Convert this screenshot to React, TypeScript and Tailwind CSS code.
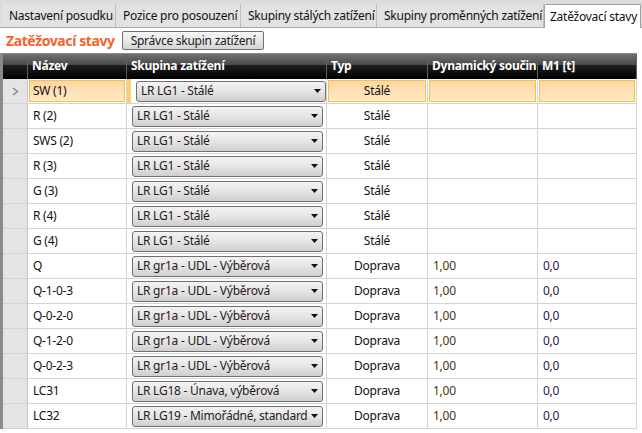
import React from "react";

const TABS = [
    { label: "Nastavení posudku", w: "w-[114px]" },
    { label: "Pozice pro posouzení", w: "w-[125px]" },
    { label: "Skupiny stálých zatížení", w: "w-[136px]" },
    { label: "Skupiny proměnných zatížení", w: "w-[167px]" },
];

type Row = { name: string; group: string; typ: string; dyn: string; m1: string };

const ROWS: Row[] = [
    { name: "SW (1)", group: "LR LG1 - Stálé", typ: "Stálé", dyn: "", m1: "" },
    { name: "R (2)", group: "LR LG1 - Stálé", typ: "Stálé", dyn: "", m1: "" },
    { name: "SWS (2)", group: "LR LG1 - Stálé", typ: "Stálé", dyn: "", m1: "" },
    { name: "R (3)", group: "LR LG1 - Stálé", typ: "Stálé", dyn: "", m1: "" },
    { name: "G (3)", group: "LR LG1 - Stálé", typ: "Stálé", dyn: "", m1: "" },
    { name: "R (4)", group: "LR LG1 - Stálé", typ: "Stálé", dyn: "", m1: "" },
    { name: "G (4)", group: "LR LG1 - Stálé", typ: "Stálé", dyn: "", m1: "" },
    { name: "Q", group: "LR gr1a - UDL - Výběrová", typ: "Doprava", dyn: "1,00", m1: "0,0" },
    { name: "Q-1-0-3", group: "LR gr1a - UDL - Výběrová", typ: "Doprava", dyn: "1,00", m1: "0,0" },
    { name: "Q-0-2-0", group: "LR gr1a - UDL - Výběrová", typ: "Doprava", dyn: "1,00", m1: "0,0" },
    { name: "Q-1-2-0", group: "LR gr1a - UDL - Výběrová", typ: "Doprava", dyn: "1,00", m1: "0,0" },
    { name: "Q-0-2-3", group: "LR gr1a - UDL - Výběrová", typ: "Doprava", dyn: "1,00", m1: "0,0" },
    { name: "LC31", group: "LR LG18 - Únava, výběrová", typ: "Doprava", dyn: "1,00", m1: "0,0" },
    { name: "LC32", group: "LR LG19 - Mimořádné, standard", typ: "Doprava", dyn: "1,00", m1: "0,0" },
];

const HEADERS = [
    { label: "Název", w: "w-[99px]" },
    { label: "Skupina zatížení", w: "w-[200px]" },
    { label: "Typ", w: "w-[101px]" },
    { label: "Dynamický součin", w: "w-[110px]" },
    { label: "M1 [t]", w: "w-[99px]" },
];

function Combo({ value }: { value: string }) {
    return (
        <div className="flex h-[21px] w-[191px] items-center justify-between rounded-[3px] border border-[#707070] bg-gradient-to-b from-[#f3f3f3] via-[#e5e5e5] to-[#cfcfcf] pl-[4px] pr-[4px]">
            <span className="whitespace-nowrap text-[#2a1a1a]">{value}</span>
            <svg width="7" height="4" viewBox="0 0 7 4" className="mb-[1px] shrink-0">
                <path d="M0 0h7L3.5 4z" fill="#111" />
            </svg>
        </div>
    );
}

function Cell({ w, sel, children, className = "" }: { w: string; sel: boolean; children?: React.ReactNode; className?: string }) {
    return (
        <div className={`${w} h-full shrink-0 border-r border-[#d4d4d4] p-[1px]`}>
            <div
                className={`flex h-full items-center ${className} ${sel ? "border border-[#f3c24c] bg-gradient-to-b from-[#fdd6a2] to-[#feeac6]" : "border border-transparent"}`}
            >
                {children}
            </div>
        </div>
    );
}

export default function App() {
    return (
        <div
            className="h-[433px] w-[642px] overflow-hidden bg-white text-[12px] tracking-[-0.25px] text-[#111]"
            style={{ fontFamily: '"Noto Sans", "DejaVu Sans", sans-serif' }}
        >
            {/* Tab strip */}
            <div className="flex h-[28px] items-end border-b border-[#a9a9a9] bg-[#dcdcdc] pl-[2px]">
                {TABS.map((t) => (
                    <div
                        key={t.label}
                        className={`${t.w} flex h-[23px] items-center overflow-hidden whitespace-nowrap border-r border-[#bdbdbd] bg-[#e2e2e2] pl-[7px]`}
                    >
                        {t.label}
                    </div>
                ))}
                <div className="-mb-[1px] flex h-[24px] w-[97px] items-center overflow-hidden whitespace-nowrap rounded-t-[2px] border border-b-0 border-[#a0a0a0] bg-white pl-[5px]">
                    Zatěžovací stavy
                </div>
            </div>

            {/* Title row */}
            <div className="flex h-[25px] items-center pl-[6px]">
                <span className="w-[116px] text-[14px] font-bold tracking-[-0.4px] text-[#f5622a]">Zatěžovací stavy</span>
                <button className="flex h-[19px] w-[142px] items-center justify-center rounded-[2px] border border-[#707070] bg-gradient-to-b from-[#f6f6f6] via-[#e8e8e8] to-[#d3d3d3] text-[#222]">
                    Správce skupin zatížení
                </button>
            </div>

            {/* Grid */}
            <div className="flex">
                <div className="w-[3px] shrink-0 bg-[#8a8a8a]" />
                <div className="flex flex-col">
                    <div className="flex h-[26px] border-t border-[#8c8c8c] bg-[linear-gradient(#727272,#4a4a4a_42%,#1e1e1e_46%,#000)]">
                        <div className="w-[25px] shrink-0 border-r border-[#606060]" />
                        {HEADERS.map((h) => (
                            <div
                                key={h.label}
                                className={`${h.w} flex shrink-0 items-end overflow-hidden whitespace-nowrap border-r border-[#606060] pb-[4px] pl-[4px] font-bold text-white`}
                            >
                                {h.label}
                            </div>
                        ))}
                    </div>

                    {ROWS.map((r, i) => {
                        const sel = i === 0;
                        return (
                            <div key={r.name} className="flex h-[25px] border-b border-[#d4d4d4]">
                                <div className="flex w-[25px] shrink-0 items-center justify-center border-r border-[#c4c4c4] bg-[#e4e4e4]">
                                    {sel && (
                                        <svg width="7" height="9" viewBox="0 0 7 9">
                                            <path d="M1 1l4.5 3.5L1 8" stroke="#8a8a8a" strokeWidth="1.5" fill="none" />
                                        </svg>
                                    )}
                                </div>
                                <Cell w="w-[99px]" sel={sel} className="pl-[3px]">
                                    {r.name}
                                </Cell>
                                <div className={`flex h-full w-[200px] shrink-0 items-center border-r border-[#d4d4d4] pl-[5px] ${sel ? "border-l-[4px] border-l-[#f5cf7c] pl-[1px]" : ""}`}>
                                    <Combo value={r.group} />
                                </div>
                                <Cell w="w-[101px]" sel={sel} className="justify-center">
                                    {r.typ}
                                </Cell>
                                <Cell w="w-[110px]" sel={sel} className="pl-[3px] text-[#4a3510]">
                                    {r.dyn}
                                </Cell>
                                <Cell w="w-[99px]" sel={sel} className="pl-[3px] text-[#252045]">
                                    {r.m1}
                                </Cell>
                            </div>
                        );
                    })}
                </div>
            </div>
        </div>
    );
}
